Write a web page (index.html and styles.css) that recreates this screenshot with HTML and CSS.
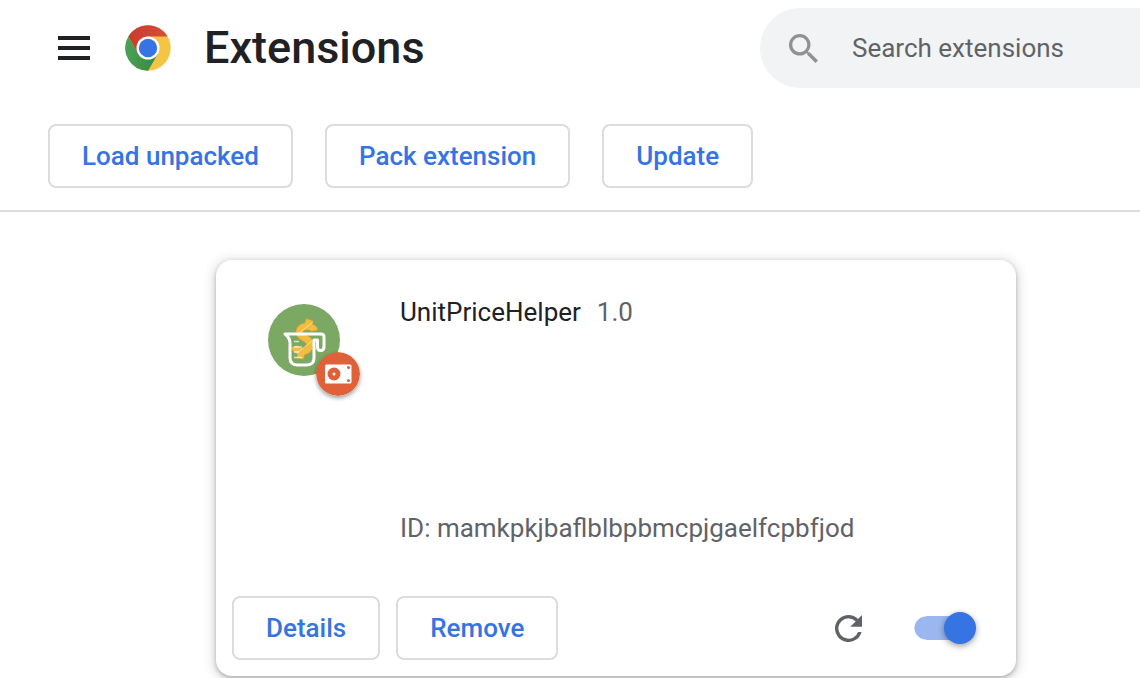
FILE: index.html
```html
<!DOCTYPE html>
<html lang="en">
<head>
<meta charset="utf-8">
<title>Extensions</title>
<link rel="stylesheet" href="styles.css">
</head>
<body>
<header class="toolbar">
  <div class="brand">
    <button class="icon-button" type="button" aria-label="Main menu">
      <svg class="menu-icon" viewBox="0 0 32 24"><path d="M0 0h32v4H0zM0 10h32v4H0zM0 20h32v4H0z" fill="#202124"/></svg>
    </button>
    <svg class="logo" viewBox="0 0 46 46" aria-hidden="true">
      <defs>
        <linearGradient id="red" x1="0" x2="1"><stop offset="0" stop-color="#c93b2c"/><stop offset="1" stop-color="#d94d3d"/></linearGradient>
        <linearGradient id="green" x1="0" x2="1"><stop offset="0" stop-color="#4aa257"/><stop offset="1" stop-color="#38873f"/></linearGradient>
      </defs>
      <circle cx="23" cy="23" r="22.700" fill="#f5c445"/>
      <path d="M3.400 11.500A22.700 22.700 0 0 1 42.600 11.500H23L13 28.800z" fill="url(#red)"/>
      <path d="M3.400 11.500A22.700 22.700 0 0 0 23 45.700L33 28.800 13 28.800z" fill="url(#green)"/>
      <circle cx="23" cy="23" r="11.500" fill="#fff"/>
      <circle cx="23" cy="23" r="9.200" fill="#3574e2"/>
    </svg>
    <h1 class="title">Extensions</h1>
  </div>
  <label class="search">
    <svg class="search-icon" viewBox="3 3 17.5 17.5" aria-hidden="true"><path d="M15.5 14h-.79l-.28-.27A6.47 6.47 0 0 0 16 9.500 6.500 6.500 0 1 0 9.500 16c1.610 0 3.090-.59 4.230-1.570l.27.28v.79l5 4.990L20.490 19l-4.990-5zm-6 0C7.010 14 5 11.990 5 9.500S7.010 5 9.500 5 14 7.010 14 9.500 11.990 14 9.500 14z" fill="#8f9193"/></svg>
    <input class="search-input" type="search" placeholder="Search extensions" aria-label="Search extensions">
  </label>
</header>
<nav class="actions" aria-label="Developer tools">
  <button class="button" type="button">Load unpacked</button>
  <button class="button" type="button">Pack extension</button>
  <button class="button" type="button">Update</button>
</nav>
<main class="content">
  <article class="card">
    <div class="card-main">
      <div class="extension-icon">
        <svg class="icon-art" viewBox="0 0 72 72" aria-hidden="true">
          <circle cx="36" cy="36" r="36" fill="#7ba863"/>
          <g fill="none" stroke-linejoin="round">
            <path d="M46.500 27C45 21 32.500 20.500 31.500 27.500C30.500 35 43 33 42 41C41 49.500 28.500 49.500 26.500 42M41.500 15L39.500 22M34 48L32 55" stroke="#cf9a35" stroke-width="8"/>
            <path d="M46.500 26.500C45 21 32.500 20.500 31.500 27.500C30.500 35 43 33 42 41C41 49.500 28.500 49.500 26.500 42.500M41.500 16L39.500 22M34 48L32 54" stroke="#f0bd40" stroke-width="6.500"/>
            <path d="M30 30L45 18M29 49L44 37" stroke="#f9df93" stroke-width="1"/>
          </g>
          <path d="M17 30H53Q56 30 56 33V43Q56 46.500 52.500 46.500Q49.500 46.500 49.500 43V36H46V54Q46 61 38 61H30Q22 61 22 54V39Q22 34 17 30Z" fill="none" stroke="#fff" stroke-width="3" stroke-linejoin="round"/>
          <path d="M26 37.500h5M26 43h8M26 48h5M26 53.500h8" stroke="#fff" stroke-opacity="0.7" stroke-width="1.500"/>
        </svg>
        <svg class="badge" viewBox="0 0 44 44" role="img" aria-label="Unpacked extension">
          <circle cx="22" cy="22" r="22" fill="#df6039"/>
          <rect x="9" y="12.500" width="26.500" height="19" rx="1.500" fill="#fff"/>
          <circle cx="18" cy="22" r="6.500" fill="#df6039"/>
          <circle cx="18" cy="22" r="1.500" fill="#fff"/>
          <circle cx="32.500" cy="15.500" r="1.500" fill="#df6039"/>
          <circle cx="32.500" cy="28.500" r="1.500" fill="#df6039"/>
        </svg>
      </div>
      <div class="details">
        <div class="name-row"><h2 class="name">UnitPriceHelper</h2><span class="version">1.0</span></div>
        <p class="extension-id">ID: mamkpkjbaflblbpbmcpjgaelfcpbfjod</p>
      </div>
    </div>
    <footer class="card-footer">
      <button class="button" type="button">Details</button>
      <button class="button" type="button">Remove</button>
      <button class="icon-button reload" type="button" aria-label="Reload">
        <svg class="reload-icon" viewBox="4 4 16 16"><path d="M17.650 6.350A7.960 7.960 0 0 0 12 4a8 8 0 1 0 7.730 10h-2.080A6 6 0 1 1 12 6c1.660 0 3.140.69 4.220 1.780L13 11h7V4z" fill="#5f6368"/></svg>
      </button>
      <input class="toggle" type="checkbox" role="switch" aria-label="Enable UnitPriceHelper" checked>
    </footer>
  </article>
</main>
</body>
</html>
```
FILE: styles.css
```css
* { box-sizing: border-box; }

body {
  margin: 0;
  background: #fff;
  color: #202124;
  font: 26px/40px Roboto, "Liberation Sans", sans-serif;
}

h1, h2, p { margin: 0; }

.toolbar {
  display: grid;
  grid-template-columns: minmax(auto, 702px) minmax(300px, 1fr);
  align-items: center;
  padding: 8px 0 8px 58px;
}

.brand { display: flex; align-items: center; }

.icon-button {
  display: flex;
  padding: 0;
  border: 0;
  background: none;
}

.menu-icon { width: 32px; height: 24px; }

.logo {
  width: 46px;
  height: 46px;
  margin: 0 33px 0 35px;
}

.title { font-size: 45px; line-height: 56px; font-weight: 500; }

.search {
  display: flex;
  align-items: center;
  gap: 34px;
  height: 80px;
  padding-left: 29px;
  border-radius: 40px 0 0 40px;
  background: #f1f3f4;
}

.search-icon { width: 29px; height: 29px; flex: none; }

.search-input {
  flex: 1;
  min-width: 0;
  padding: 0;
  border: 0;
  outline: 0;
  background: none;
  color: #202124;
  font: inherit;
}

.search-input::placeholder { color: #5f6368; opacity: 1; }

.actions {
  display: flex;
  gap: 32px;
  padding: 28px 48px 22px;
  border-bottom: 2px solid #dadce0;
}

.button {
  height: 64px;
  padding: 0 32px;
  border: 2px solid #dadce0;
  border-radius: 8px;
  background: #fff;
  color: #3574e2;
  font: inherit;
  font-weight: 500;
}

.content { padding: 48px 124px 2px 216px; }

.card {
  max-width: 800px;
  border-radius: 16px;
  background: #fff;
  box-shadow: 0 2px 4px rgba(60, 64, 67, 0.3), 0 2px 12px 2px rgba(60, 64, 67, 0.2);
}

.card-main {
  display: flex;
  gap: 60px;
  min-height: 336px;
  padding: 32px 40px 48px 52px;
}

.extension-icon {
  position: relative;
  flex: none;
  width: 72px;
  height: 72px;
  margin-top: 12px;
}

.icon-art { display: block; width: 100%; }

.badge {
  position: absolute;
  right: -20px;
  bottom: -20px;
  width: 44px;
  height: 44px;
  border-radius: 50%;
  box-shadow: 0 2px 4px rgba(0, 0, 0, 0.4);
}

.details {
  display: flex;
  flex-direction: column;
  justify-content: space-between;
}

.name-row { display: flex; gap: 16px; }

.name { font-size: 26px; font-weight: 400; }

.version, .extension-id { color: #5f6368; }

.card-footer {
  display: flex;
  align-items: center;
  gap: 16px;
  padding: 0 40px 16px 16px;
}

.reload { margin: 0 36px 0 auto; }

.reload-icon { width: 27px; height: 27px; }

.toggle {
  appearance: none;
  display: flex;
  align-items: center;
  justify-content: flex-end;
  width: 62px;
  height: 32px;
  margin: 0;
  background: linear-gradient(#9ab7f0, #9ab7f0) center / 38px 24px no-repeat,
    radial-gradient(circle at 12px 16px, #9ab7f0 11px, transparent 12px);
}

.toggle::before {
  content: "";
  width: 32px;
  height: 32px;
  border-radius: 50%;
  background: #3574e2;
  box-shadow: 0 2px 6px rgba(0, 0, 0, 0.4);
}

.toggle:not(:checked) { justify-content: flex-start; }
```
